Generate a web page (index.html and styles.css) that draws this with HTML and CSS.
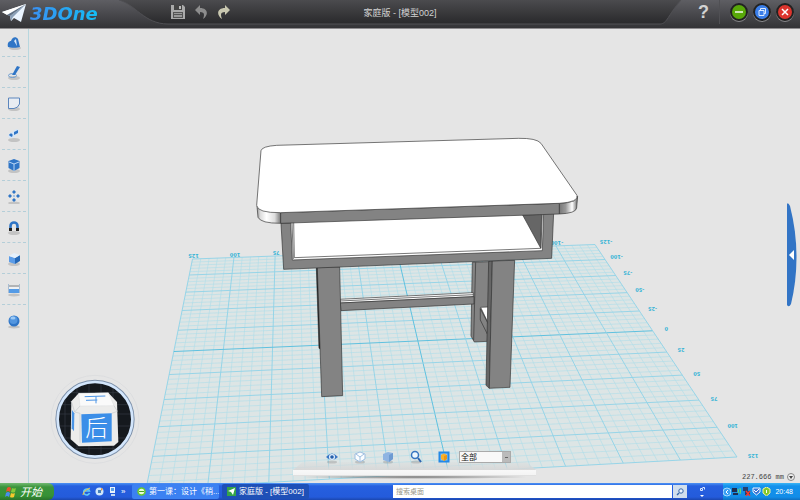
FILE: index.html
```html
<!DOCTYPE html>
<html lang="zh-CN">
<head>
    <meta charset="UTF-8">
    <meta name="viewport" content="width=device-width, initial-scale=1.0">
    <title>3DOne</title>
    <link rel="stylesheet" href="styles.css">
</head>
<body>

    <!-- Title Bar -->
    <header class="titlebar">
        <svg class="titlebar-shape" viewBox="0 0 800 28" preserveAspectRatio="none" aria-hidden="true">
            <defs>
                <linearGradient id="inner" x1="0" y1="0" x2="0" y2="1">
                    <stop offset="0" stop-color="#4b4b4e"/>
                    <stop offset="1" stop-color="#29292b"/>
                </linearGradient>
            </defs>
            <path d="M119 0C135 4 144 24 168 24H660C667 24 668 15 681 0Z" fill="url(#inner)"/>
            <path d="M119 0C135 4 144 24 168 24H660C667 24 668 15 681 0" fill="none" stroke="#505054"/>
        </svg>
        <div class="brand">
            <svg width="27" height="20" viewBox="0 0 27 20" aria-hidden="true">
                <path d="M1 8L25 0L20 18L13 14L10 17L9 12Z" fill="#eaf4ff"/>
                <path d="M25 0L9 12L10 17L12 13Z" fill="#8ba0b8"/>
                <path d="M25 0L1 8L6 11Z" fill="#fff"/>
                <path d="M6 11L25 0L9 12Z" fill="#5e6e82"/>
            </svg>
            <span class="brand-name">3DOne</span>
        </div>
        <div class="file-tools">
            <button aria-label="保存">
                <svg width="14" height="14" viewBox="0 0 14 14"><path d="M0 0H12L14 2V14H0Z" fill="#aaa"/><path d="M3 0H11V5H3Z" fill="#444"/><path d="M8 1H10V4H8Z" fill="#bbb"/><path d="M2 7H12V13H2Z" fill="#555"/><path d="M3 8H11V9H3ZM3 10H11V12H3Z" fill="#999"/></svg>
            </button>
            <button aria-label="撤销">
                <svg width="14" height="14" viewBox="0 0 14 14"><path d="M1 5L6 0V3C14 3 15 10 9 14C11 9 10 7 6 7V10Z" fill="#8d8d8d"/></svg>
            </button>
            <button aria-label="重做">
                <svg width="14" height="14" viewBox="0 0 14 14"><path d="M13 5L8 0V3C0 3 -1 10 5 14C3 9 4 7 8 7V10Z" fill="#c9c8b0"/></svg>
            </button>
        </div>
        <h1 class="doc-title">家庭版 - [模型002]</h1>
        <div class="window-tools">
            <button class="help" aria-label="帮助">?</button>
            <button class="round green" aria-label="最小化">
                <svg width="12" height="12" viewBox="0 0 12 12"><path d="M2 6H10" stroke="#fff" stroke-width="1.4"/></svg>
            </button>
            <button class="round blue" aria-label="还原">
                <svg width="12" height="12" viewBox="0 0 12 12"><path d="M3 4.5H8V9.5H3ZM4.500 4V2.500H9.500V7.500H8" fill="none" stroke="#dcebff"/></svg>
            </button>
            <button class="round red" aria-label="关闭">
                <svg width="12" height="12" viewBox="0 0 12 12"><path d="M3 3L9 9M9 3L3 9" stroke="#fff" stroke-width="1.500"/></svg>
            </button>
        </div>
    </header>

    <main class="workspace">

        <!-- Scene -->
        <svg class="scene" viewBox="0 29 800 454" preserveAspectRatio="xMidYMid slice" role="img" aria-label="课桌模型">
            <defs>
                <linearGradient id="cornerL"><stop offset="0" stop-color="#999"/><stop offset=".15" stop-color="#ddd"/><stop offset=".4" stop-color="#fff"/><stop offset=".75" stop-color="#ddd"/><stop offset="1" stop-color="#777"/></linearGradient>
                <linearGradient id="cornerR"><stop offset="0" stop-color="#777"/><stop offset=".35" stop-color="#999"/><stop offset=".7" stop-color="#fff"/><stop offset="1" stop-color="#666"/></linearGradient>
            </defs>
            <g id="grid"></g>
            <g class="model" transform="translate(240 120) scale(.3333)">
                <!-- back right leg and side rail -->
                <path class="gray" d="M697 427L750 425L744 664L703 666L693 648Z"/>
                <path d="M707 427L701 660" fill="none"/>
                <path class="gray" d="M721 566L746 614L742 642L721 600Z"/>
                <path class="white" d="M722 562L745 561L745 610Z"/>
                <!-- back rail -->
                <path class="white" d="M299 538L700 518V530L301 549Z"/>
                <path d="M301 543L700 524" fill="none"/>
                <path class="gray" d="M301 549L702 530V552L303 572Z"/>
                <!-- front legs -->
                <path class="black" d="M229 443L234 443L242 687L237 685Z"/>
                <path class="gray" d="M232 443L299 441L308 827L245 830Z"/>
                <path class="dark" d="M746 424L757 423L748 805L738 796Z"/>
                <path class="gray" d="M757 423L824 421L810 802L748 805Z"/>
                <!-- drawer frame -->
                <path class="gray" d="M123 310L941 280L935 415L131 448Z"/>
                <path class="white" d="M152 305L911 280L907 392L157 420Z"/>
                <path d="M161 305L163 413L903 385L907 280M156 305L160 417" fill="none"/>
                <path class="dark" d="M848 285L905 283L902 384Z"/>
                <!-- table top -->
                <path d="M51 258L54 292Q62 310 122 310V278Z" fill="url(#cornerL)"/>
                <path d="M958 250Q1014 248 1013 228L1010 264Q1008 280 958 282Z" fill="url(#cornerR)"/>
                <path class="gray" d="M122 278L958 250V282L122 310Z"/>
                <path class="white" d="M63 92Q66 79 110 76L835 55Q890 54 903 70L1011 226Q1018 246 958 250L122 278Q52 279 50 256Z"/>
            </g>
        </svg>

        <!-- Side Toolbar -->
        <nav class="sidebar" aria-label="建模工具">
            <button aria-label="基本实体"><svg viewBox="0 0 16 16"><ellipse cx="9" cy="13" rx="6" ry="2" class="shade"/><path d="M2 12C1 8 3 6 5 6C6 2 10 1 12 4L14 12C11 13 5 13 2 12Z" fill="#2f75c6"/><path d="M8 6L11 11L10 4Z" fill="#d9e9fa"/></svg></button>
            <button aria-label="草图绘制"><svg viewBox="0 0 16 16"><ellipse cx="8" cy="14" rx="6" ry="2" class="shade"/><ellipse cx="6.500" cy="11.500" rx="4" ry="2" fill="none" stroke="#6e9dd0"/><path d="M11 2L14 3L9 11L6 11Z" fill="#2f75c6"/></svg></button>
            <button aria-label="草图编辑"><svg viewBox="0 0 16 16"><ellipse cx="8" cy="14" rx="6" ry="2" class="shade"/><path d="M2.500 3H13.500V9Q12 13 8 13.500H2.500Z" fill="#e8ecf2" stroke="#5c86bd"/></svg></button>
            <button aria-label="特征造型"><svg viewBox="0 0 16 16"><ellipse cx="8" cy="14" rx="6" ry="2" class="shade"/><path d="M2 10C3 7 5 6 7 6C7 4 11 2 13 4C14 7 11 8 9 10C7 13 3 13 2 10Z" fill="#d6e6f7"/><path d="M3 9C5 6 8 8 6 11L4 10ZM8 6L12 4L12 7L8 9Z" fill="#2f75c6"/></svg></button>
            <button aria-label="特殊功能"><svg viewBox="0 0 16 16"><ellipse cx="8" cy="14" rx="6" ry="2" class="shade"/><path d="M8 2L13.500 4V11L8 14L2.500 11V4Z" fill="#2f75c6"/><path d="M3 5L8 7L13 5M8 7V14" fill="none" stroke="#bad6f5"/></svg></button>
            <button aria-label="基本编辑"><svg viewBox="0 0 16 16"><ellipse cx="8" cy="15" rx="6" ry="1.500" class="shade"/><path d="M8 2L10 4L8 6L6 4ZM8 10L10 12L8 14L6 12ZM4 6L6 8L4 10L2 8ZM12 6L14 8L12 10L10 8Z" fill="#2f75c6"/><circle cx="8" cy="8" r="1" fill="#8db5e2"/></svg></button>
            <button aria-label="自动吸附"><svg viewBox="0 0 16 16"><ellipse cx="8" cy="14" rx="6" ry="2" class="shade"/><path d="M4.500 10V7A3.500 3.500 0 0 1 11.500 7V10" fill="none" stroke="#2f75c6" stroke-width="2.600"/><path d="M3 9H6V12H3ZM10 9H13V12H10Z" fill="#222"/></svg></button>
            <button aria-label="组合编辑"><svg viewBox="0 0 16 16"><ellipse cx="8" cy="14" rx="6" ry="2" class="shade"/><path d="M3 6L9 8V14L3 12Z" fill="#5b9ce8"/><path d="M9 8L14 5V11L9 14Z" fill="#2468b8"/><path d="M3 6L8 3L14 5L9 8Z" fill="#e4f0fc"/></svg></button>
            <button aria-label="测量距离"><svg viewBox="0 0 16 16"><ellipse cx="8" cy="14" rx="6" ry="1.500" class="shade"/><path d="M3 4H13V8H3Z" fill="#eef1f4"/><path d="M3 5H13" stroke="#777"/><path d="M2.500 3V12M13.500 3V12" stroke="#a9bdd2"/><path d="M3 8H13V12H3Z" fill="#559be6"/></svg></button>
            <button aria-label="材质渲染"><svg viewBox="0 0 16 16"><ellipse cx="8" cy="14" rx="6" ry="1.500" class="shade"/><circle cx="8" cy="8" r="5.500" fill="#2f75c6"/><circle cx="7.500" cy="7" r="4" fill="#5396df"/><ellipse cx="7" cy="5" rx="2.500" ry="1.500" fill="#9cc9f5"/></svg></button>
        </nav>

        <!-- View Cube -->
        <svg class="viewcube" viewBox="0 0 360 330" role="img" aria-label="视图导航">
            <circle cx="165" cy="178" r="132" fill="none" stroke="#d8dadd" stroke-width="2"/>
            <circle cx="165" cy="178" r="115" fill="#15191e" stroke="#7f92ab" stroke-width="8"/>
            <path d="M75 118V238M111 84V272M147 72V284M183 72V284M219 84V272M84 98H246M62 134H268M56 162H274M58 198H272M66 234H264M96 266H234" stroke="#353b42" stroke-width="2"/>
            <circle cx="165" cy="178" r="112" fill="none" stroke="#d3e6fc" stroke-width="8"/>
            <path d="M116 100L205 98L231 126L235 246L222 257L116 259L92 238L94 124Z" fill="#ececeb"/>
            <path d="M116 100L205 98L222 137L120 138Z" fill="#fafafa" stroke="#cfd1d4"/>
            <path d="M96 150L103 160L102 214L95 205Z" fill="#4a94e6"/>
            <path d="M94 124L104 156L120 160L120 248M120 138L104 156M222 137L232 154L215 160" fill="none" stroke="#c6c9cc" stroke-width="2"/>
            <path d="M124 163L215 160L215 244L126 248Z" fill="#3b8ee8"/>
            <path d="M138 121L172 120M168 109V130M134 110L196 108" fill="none" stroke="#4a94e6" stroke-width="3"/>
            <text x="136" y="229" class="cube-face">后</text>
        </svg>

        <button class="drawer-tab" aria-label="展开资源库">
            <svg width="12" height="104" viewBox="0 0 12 104"><path d="M1 1Q2 -1 4 3C13 38 12 72 5 101Q3 105 1 102Z" fill="#3274c5"/><path d="M3 52L8 47V57Z" fill="#fff"/></svg>
        </button>

        <!-- View Toolbar -->
        <div class="viewbar">
            <div class="view-tools">
                <button aria-label="查看视图"><svg viewBox="0 0 16 16"><ellipse cx="8" cy="13" rx="5" ry="1.500" class="shade"/><path d="M2 8Q8 1 14 8Q8 14 2 8Z" fill="#3977c5"/><circle cx="8" cy="8" r="3" fill="#e6f1fc"/><circle cx="8" cy="8" r="1.800" fill="#245fa9"/></svg></button>
                <button aria-label="渲染模式"><svg viewBox="0 0 16 16"><ellipse cx="8" cy="13" rx="5" ry="1.500" class="shade"/><path d="M8 3L13 5V10L8 13L3 10V5Z" fill="#fbfdff" stroke="#9dbde0"/><path d="M4 5L8 8L12 5M8 8V12" fill="none" stroke="#9dbde0"/></svg></button>
                <button aria-label="显示隐藏"><svg viewBox="0 0 16 16"><ellipse cx="8" cy="13" rx="5" ry="1.500" class="shade"/><path d="M3 5L8 3L13 4V10L9 13L3 11Z" fill="#8fb4e2"/><path d="M9 6L13 4V10L9 13Z" fill="#6e9bd2"/></svg></button>
                <button aria-label="缩放"><svg viewBox="0 0 16 16"><ellipse cx="8" cy="13" rx="5" ry="1.500" class="shade"/><circle cx="7" cy="6" r="3.500" fill="#edf6ff" stroke="#3774c0" stroke-width="1.500"/><path d="M10 9L13 13" stroke="#2f66b0" stroke-width="2"/></svg></button>
                <button aria-label="截图"><svg viewBox="0 0 16 16"><path d="M3.500 3.500H12.500V12.500H3.500Z" fill="#8cc4f7" stroke="#2388e6" stroke-width="2"/><path d="M5 6L8 4.500L11 6V10L8 12L5 10Z" fill="#f9b02a"/><path d="M8 7L11 6V10L8 12Z" fill="#e8971a"/></svg></button>
                <select aria-label="过滤">
                    <option>全部</option>
                </select>
            </div>
            <div class="shelf"></div>
        </div>

        <div class="measure">
            <span>227.666 mm</span>
            <svg width="8" height="8" viewBox="0 0 8 8" aria-hidden="true"><circle cx="4" cy="4" r="3.500" fill="#eee" stroke="#888"/><path d="M2 3H6L4 6Z" fill="#444"/></svg>
        </div>
    </main>

    <!-- Taskbar -->
    <footer class="taskbar">
        <button class="start">
            <svg width="12" height="12" viewBox="0 0 12 12" aria-hidden="true"><path d="M2 2Q4 0 6 2L5 6Q3 4 1 6Z" fill="#e8532d"/><path d="M7 2Q9 3 11 2L10 6Q8 7 6 6Z" fill="#86c93b"/><path d="M1 7Q3 5 5 7L4 11Q2 9 0 11Z" fill="#4a8df0"/><path d="M6 7Q8 8 10 7L9 11Q7 12 5 11Z" fill="#f7c82d"/></svg>
            开始
        </button>
        <div class="quick">
            <svg width="9" height="9" viewBox="0 0 9 9" aria-hidden="true"><path d="M7.500 6A3 3 0 1 1 7.500 4H2" fill="none" stroke="#5fc5fa" stroke-width="1.600"/><path d="M1 8Q1 4 8 1" fill="none" stroke="#f3c743"/></svg>
            <svg width="9" height="9" viewBox="0 0 9 9" aria-hidden="true"><circle cx="4.500" cy="4.500" r="4" fill="#cfe6fa"/><path d="M3 3H6V6H3Z" fill="#477fba"/><path d="M6 1L8 2L6 4Z" fill="#e88f35"/></svg>
            <svg width="9" height="9" viewBox="0 0 9 9" aria-hidden="true"><path d="M2 0H7V6H2Z" fill="#e9f2fc"/><path d="M3 1H6V4H3Z" fill="#5ba1e8"/><path d="M3 7H7V9H3Z" fill="#c2d7f0"/></svg>
            <span>»</span>
        </div>
        <button class="task">
            <svg width="9" height="9" viewBox="0 0 9 9" aria-hidden="true"><circle cx="4.500" cy="4.500" r="3.500" fill="#e8fbd8" stroke="#67c92d" stroke-width="1.500"/><path d="M2 4.500H7" stroke="#4ba51f"/></svg>
            <span>第一课：设计《稍...</span>
        </button>
        <button class="task active">
            <svg width="9" height="9" viewBox="0 0 9 9" aria-hidden="true"><path d="M0 0H9V9H0Z" fill="#35a34a"/><path d="M1 4L8 1L6 8L4 5Z" fill="#fff"/></svg>
            <span>家庭版 - [模型002]</span>
        </button>
        <form class="search">
            <input type="text" placeholder="搜索桌面" aria-label="搜索桌面">
            <button type="button" aria-label="搜索"><svg width="8" height="8" viewBox="0 0 8 8"><circle cx="5" cy="3" r="2.200" fill="#eef6ff" stroke="#3466a8"/><path d="M3 5L1 7" stroke="#3466a8" stroke-width="1.500"/></svg></button>
        </form>
        <svg class="more" width="6" height="12" viewBox="0 0 6 12" aria-hidden="true"><path d="M1.500 2.500H3.500V4.500H1.500ZM3.500 1.500H5.500V3.500" fill="none" stroke="#dce9ff"/><path d="M1 9H5L3 11Z" fill="#fff"/></svg>
        <div class="tray">
            <svg width="8" height="10" viewBox="0 0 8 10" aria-hidden="true"><circle cx="4" cy="5" r="4" fill="#3aa0f5" stroke="#a6d8fb"/><path d="M5 3L3 5L5 7" fill="none" stroke="#fff"/></svg>
            <svg width="9" height="9" viewBox="0 0 9 9" aria-hidden="true"><path d="M0 1H5V5H0ZM1 6H6V8H1Z" fill="#1d2f55"/><path d="M6 2Q7 4 6 6M8 1Q9 4 8 7" fill="none" stroke="#6ee060"/></svg>
            <svg width="9" height="9" viewBox="0 0 9 9" aria-hidden="true"><path d="M1 0H6V4H1ZM3 4H8V8H3Z" fill="#26406f"/><path d="M4 4L8 9M8 4L4 9" stroke="#f2382d" stroke-width="1.500"/></svg>
            <svg width="9" height="9" viewBox="0 0 9 9" aria-hidden="true"><path d="M1 1H8V5L4.500 8L1 5Z" fill="#3b75d4" stroke="#eaf4ff"/><path d="M2 3L4 5L7 2" fill="none" stroke="#fff"/></svg>
            <svg width="9" height="9" viewBox="0 0 9 9" aria-hidden="true"><path d="M4.500 0L8 2V6L4.500 9L1 6V2Z" fill="#83c72a" stroke="#f2f0a2"/><path d="M4.500 3V6" stroke="#fff"/></svg>
            <time>20:48</time>
        </div>
    </footer>

    <script src="grid.js"></script>
</body>
</html>
```

FILE: styles.css
```css
* {
    margin: 0;
    padding: 0;
    box-sizing: border-box;
}

body {
    display: flex;
    flex-direction: column;
    height: 100vh;
    overflow: hidden;
    font-family: "Liberation Sans", "Noto Sans CJK SC", sans-serif;
    font-size: 8px;
    background-color: #e5e5e5;
}

button {
    border: none;
    background: none;
    font: inherit;
    color: inherit;
    cursor: pointer;
}

svg {
    display: block;
    flex: none;
}

.shade {
    fill: #999;
    opacity: 0.45;
}

/* Title Bar */
.titlebar {
    position: relative;
    display: grid;
    grid-template-columns: 1fr auto 1fr;
    align-items: center;
    height: 29px;
    flex: none;
    background: linear-gradient(#5e5e63, #333336);
    border-bottom: 1px solid #8d8b8e;
    color: #d2d2d2;
}

.titlebar-shape {
    position: absolute;
    inset: 0;
    width: 100%;
    height: 100%;
}

.titlebar > div,
.doc-title {
    position: relative;
}

.brand {
    display: flex;
    align-items: center;
    gap: 2px;
    padding-left: 1px;
    grid-column: 1;
    grid-row: 1;
}

.brand-name {
    font: italic bold 18px/24px "DejaVu Sans", sans-serif;
    background: linear-gradient(90deg, #3b8ff2, #14bdf4);
    -webkit-background-clip: text;
    background-clip: text;
    color: transparent;
}

.file-tools {
    display: flex;
    gap: 9px;
    grid-column: 1;
    grid-row: 1;
    margin-left: 171px;
    justify-self: start;
    padding-bottom: 4px;
}

.doc-title {
    grid-column: 2;
    font-size: 9px;
    font-weight: normal;
    padding-bottom: 4px;
}

.window-tools {
    display: flex;
    align-items: center;
    justify-content: flex-end;
    gap: 5px;
    padding: 0 6px 4px 0;
}

.help {
    width: 32px;
    height: 24px;
    margin-right: 5px;
    text-align: center;
    font: bold 18px/24px "Liberation Sans", sans-serif;
    border-right: 1px solid #505054;
}

.round {
    display: grid;
    place-items: center;
    width: 18px;
    height: 18px;
    border: 2px solid #222;
    border-radius: 50%;
    box-shadow: 0 1px 0 #87878a;
}

.green {
    background-color: #58a809;
}

.blue {
    background-color: #3a7ee9;
}

.red {
    background-color: #dc352e;
}

/* Workspace */
.workspace {
    position: relative;
    flex: 1;
    min-height: 0;
    display: flex;
}

.scene {
    position: absolute;
    inset: 0;
    width: 100%;
    height: 100%;
}

.plane {
    fill: #dde5e5;
}

.minor {
    stroke: #aedde9;
    stroke-width: 0.6;
}

.major {
    stroke: #8ed3e8;
    stroke-width: 0.9;
}

.axis {
    stroke: #5fc1df;
    stroke-width: 1;
}

.tick {
    fill: #35b4d6;
    font: bold 5px "DejaVu Sans", sans-serif;
    text-anchor: middle;
}

.model {
    stroke: #333;
    stroke-width: 2;
    stroke-linejoin: round;
}

.gray {
    fill: #838383;
}

.dark {
    fill: #666;
}

.white {
    fill: #fff;
}

.black {
    fill: #111;
}

/* Side Toolbar */
.sidebar {
    position: relative;
    width: 29px;
    padding: 0 2px;
    border-right: 1px solid #b7d6de;
    background-color: #e5e5e5;
}

.sidebar button {
    display: grid;
    place-items: center;
    width: 100%;
    height: 31px;
    border-bottom: 1px dashed #b4ced8;
}

.sidebar button:first-child {
    height: 28px;
}

.sidebar button:last-child {
    border-bottom: none;
}

.sidebar svg,
.view-tools svg {
    width: 16px;
    height: 16px;
}

/* View Cube */
.viewcube {
    position: absolute;
    left: 40px;
    bottom: 13px;
    width: 120px;
    height: 110px;
}

.cube-face {
    fill: #fff;
    font: 300 68px "Noto Sans CJK SC", sans-serif;
}

.drawer-tab {
    position: absolute;
    right: 2px;
    top: 174px;
}

/* View Toolbar */
.viewbar {
    position: absolute;
    left: 293px;
    bottom: 4px;
    width: 243px;
}

.view-tools {
    position: relative;
    z-index: 1;
    display: flex;
    align-items: center;
    gap: 12px;
    padding-left: 31px;
    height: 18px;
    margin-bottom: -4px;
}

.view-tools select {
    appearance: none;
    width: 52px;
    height: 12px;
    margin-left: -5px;
    padding-left: 1px;
    border: 1px solid #aaa;
    border-radius: 0;
    font: 8px/10px "Noto Sans CJK SC", sans-serif;
    color: #111;
    background: linear-gradient(#666, #666) 45px 5px / 3px 1px no-repeat, linear-gradient(90deg, #f8f8f8 42px, #bbb 42px);
}

.shelf {
    height: 14px;
    background: linear-gradient(rgba(215, 215, 215, 0.2), #d8d8d8 8px, #f8f8f8 8px, #f4f4f4 13px, #ccc);
    clip-path: polygon(4% 0, 96% 0, 100% 8px, 100% 100%, 0 100%, 0 8px);
}

.viewbar::after {
    content: "";
    display: block;
    height: 4px;
    margin: -1px 6px 0;
    background: radial-gradient(closest-side, #777, rgba(160, 160, 160, 0));
}

.measure {
    position: absolute;
    right: 5px;
    bottom: 1px;
    display: flex;
    align-items: center;
    gap: 3px;
    font: 7px/10px "Liberation Mono", monospace;
    color: #444;
}

/* Taskbar */
.taskbar {
    display: flex;
    align-items: stretch;
    height: 17px;
    flex: none;
    background: linear-gradient(#4d92f4, #2660df 3px, #245bdb 14px, #1b47af);
    color: #fff;
    line-height: 15px;
    white-space: nowrap;
}

.start {
    display: flex;
    align-items: center;
    gap: 3px;
    width: 54px;
    padding-left: 5px;
    border-radius: 0 6px 6px 0;
    background: linear-gradient(#72b972, #3b943b 4px, #359135 13px, #2b722b);
    font: italic 11px/15px "Noto Sans CJK SC", sans-serif;
}

.quick {
    display: flex;
    align-items: center;
    gap: 4px;
    width: 78px;
    padding-left: 28px;
}

.task {
    display: flex;
    align-items: center;
    gap: 3px;
    width: 87px;
    margin: 1px 3px 1px 0;
    padding: 0 5px;
    border-radius: 2px;
    overflow: hidden;
    background-color: #3c81f2;
}

.task.active {
    background-color: #1e50b7;
}

.search {
    display: flex;
    flex: 1;
    margin: 2px 0 2px 81px;
}

.search input {
    flex: 1;
    min-width: 0;
    padding-left: 3px;
    border: none;
    font: 7px/13px "Noto Sans CJK SC", sans-serif;
}

.search input::placeholder {
    color: #999888;
}

.search button {
    display: grid;
    place-items: center;
    width: 14px;
    margin-left: 1px;
    background-color: #d2dfed;
}

.more {
    align-self: center;
    margin: 0 18px 0 12px;
}

.tray {
    display: flex;
    align-items: center;
    gap: 1px;
    padding: 0 7px 0 0;
    background: linear-gradient(#3bb5f5, #1391ec 3px, #128de8 14px, #0f6fc0);
}

.tray time {
    margin-left: 3px;
    font-size: 7px;
}
```

FILE: grid.js
```js
// Ground plane: corners in screen space, back-left first, clockwise
const plane = [[192.5, 259], [595, 244.5], [737, 457], [146, 489]];
const grid = document.getElementById('grid');

// Perspective mapping from the unit square to the four corners
function project(u, v) {
    const [[x0, y0], [x1, y1], [x2, y2], [x3, y3]] = plane;
    const dx1 = x1 - x2, dx2 = x3 - x2, sx = x0 - x1 + x2 - x3;
    const dy1 = y1 - y2, dy2 = y3 - y2, sy = y0 - y1 + y2 - y3;
    const det = dx1 * dy2 - dx2 * dy1;
    const g = (sx * dy2 - dx2 * sy) / det;
    const h = (dx1 * sy - sx * dy1) / det;
    const w = g * u + h * v + 1;
    return [
        ((x1 - x0 + g * x1) * u + (x3 - x0 + h * x3) * v + x0) / w,
        ((y1 - y0 + g * y1) * u + (y3 - y0 + h * y3) * v + y0) / w
    ];
}

function line(a, b, name) {
    return `<path class="${name}" d="M${a}L${b}"/>`;
}

function label(x, y, value) {
    return `<text class="tick" x="${x}" y="${y}" transform="rotate(180 ${x} ${y})">${value}</text>`;
}

let minor = '';
let major = '';
for (let i = 0; i <= 50; i++) {
    const t = i / 50;
    const name = i === 25 ? 'axis' : i % 5 === 0 ? 'major' : 'minor';
    const lines = line(project(t, 0), project(t, 1), name) + line(project(0, t), project(1, t), name);
    if (name === 'minor') {
        minor += lines;
    } else {
        major += lines;
    }
}

let labels = '';
for (let i = 0; i <= 10; i++) {
    const [x, y] = project(1, i / 10);
    labels += label(x + 11 + i * 0.5, y - 5 + i * 0.2, i * 25 - 125);
}
for (const i of [0, 1, 2, 9]) {
    const [x, y] = project(i / 10, 0);
    labels += label(x + 1, y - 5, 125 - i * 25);
}

grid.innerHTML = `<path class="plane" d="M${plane.join('L')}Z"/>` + minor + major + labels;
```
